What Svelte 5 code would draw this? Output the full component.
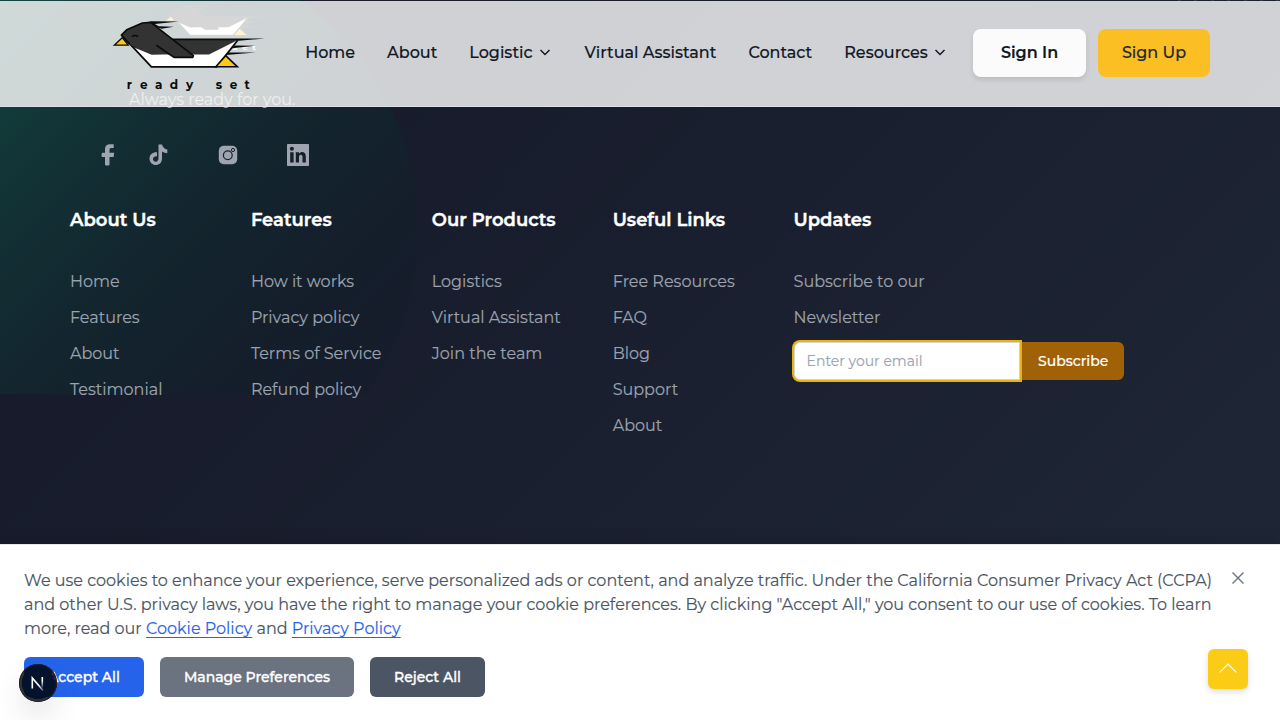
<script>
  const columns = [
    { title: 'About Us', items: ['Home', 'Features', 'About', 'Testimonial'] },
    { title: 'Features', items: ['How it works', 'Privacy policy', 'Terms of Service', 'Refund policy'] },
    { title: 'Our Products', items: ['Logistics', 'Virtual Assistant', 'Join the team'] },
    { title: 'Useful Links', items: ['Free Resources', 'FAQ', 'Blog', 'Support', 'About'] }
  ];
  const nav = [
    { label: 'Home' },
    { label: 'About' },
    { label: 'Logistic', menu: true },
    { label: 'Virtual Assistant' },
    { label: 'Contact' },
    { label: 'Resources', menu: true }
  ];
</script>

{#snippet bird(ink, outline)}
  <svg class="bird" viewBox="0 0 154 76" aria-hidden="true">
    <g transform="translate(.7 .2)">
      <path d="M1.6 30 9.5 22.5 15.5 30Z" fill="#fbc917" stroke={outline} stroke-width="1.3" />
      <path d="M9 20 38.7 51.6H104L124.7 25 58 24Z" fill="#fff" />
      <path d="M18 31 38.7 39.2H96.3L124.7 25 104 24H52Z" fill="#333" />
      <path d="M9 20 38.7 51.6H104L125 25" fill="none" stroke={outline} stroke-width="1.8" />
      <path d="M103 51.6 113 40.5 124.7 51.6Z" fill="#fbc917" stroke={outline} stroke-width="1.6" />
      <path d="M57 23.2H125L152 23.2 126 25.6 122 25H59Z" fill={outline} />
      <path d="M122 30.4 143 30.6 119 33ZM116 37.2 143 37.4 113 39.8Z" fill={outline} />
      <path d="M37 6 66 6.4 42 8.8 46 11 61 11.6 49 13.5 42 11Z" fill={outline} />
      <path d="M8.7 20 14 14.6 29.7 7.8 38 7.2 80.7 40.5 80 42.2H61.3L43.7 30 56 38.6 38.7 39.2 17 29Z" fill="#333" />
      <path d="M17 29 8.7 20 14 14.6 29.7 7.8 38 7.2 80.7 40.5 80 42.2H61.3L43.7 30" fill="none" stroke={outline} stroke-width="1.7" stroke-linejoin="round" />
      <path d="M19 21.6q3.4-2.6 6.6 0" fill="none" stroke={outline} stroke-width="1.4" />
    </g>
    <text y="73.6" x="14.8 28 43 57.8 74 0 103.8 117.8 132.6" font-family="Montserrat, Lato, sans-serif" font-weight="700" font-size="12" fill={ink}>ready set</text>
  </svg>
{/snippet}

<div class="page">
  <div class="glow"></div>
  <div class="dots"></div>
  <div class="ghost">{@render bird('#fff', '#3a3a3a')}</div>
  <header>
    <div class="logo">{@render bird('#0b0b0b', '#0b0b0b')}</div>
    <nav>
      {#each nav as item}
        <a href="#top">{item.label}{#if item.menu}<svg width="12" height="12" viewBox="0 0 12 12"><path d="M1.5 4 6 8.5 10.5 4" fill="none" stroke="#111827" stroke-width="1.5" /></svg>{/if}</a>
      {/each}
    </nav>
    <div class="auth">
      <button class="signin">Sign In</button>
      <button class="signup">Sign Up</button>
    </div>
  </header>
  <p class="tagline">Always ready for you.</p>

  <main>
    <div class="social">
      <svg class="fb" width="14" height="22" viewBox="0 0 14 22"><path d="M4 21V13H.8Q.2 10.7 1 8.7H4V5Q4 .2 9 .2H12.7V4H10Q8.5 4 8.5 5.5V8.7H13.2L12.6 13H8.5V21Q6.2 22 4 21Z" /></svg>
      <svg class="tt" width="19" height="22" viewBox="0 0 19 22"><path d="M9.5.5H13Q14 4.6 18.3 5.6V9.2Q15.5 9.2 13 7.5V14.5C13 23 1 23.3.5 14.8.4 10.5 4 8 8 8.4V12.2C2.7 11.8 3 17.6 6.7 17.7 8.7 17.7 9.5 16 9.5 14Z" /></svg>
      <svg class="ig" width="20" height="20" viewBox="0 0 20 20"><rect x=".8" y=".8" width="18.4" height="18.4" rx="5" /><circle cx="9.8" cy="10.2" r="4.4" fill="none" stroke="#14242e" stroke-width="1.2" /><circle cx="15" cy="5" r="1.6" fill="none" stroke="#14242e" stroke-width="1" /></svg>
      <svg class="li" width="22" height="22" viewBox="0 0 22 22"><rect width="22" height="22" rx=".7" /><path d="M3.2 8.3H6.6V18.5H3.2ZM8.8 8.3H12V9.7C14 7 18.8 7.6 18.8 12.2V18.5H15.5V13C15.5 10 12 10.2 12 13V18.5H8.8Z" fill="#14202b" /><circle cx="4.9" cy="4.8" r="2" fill="#14202b" /></svg>
    </div>
    <div class="columns">
      {#each columns as c}
        <section>
          <h3>{c.title}</h3>
          {#each c.items as label}<a href="#top">{label}</a>{/each}
        </section>
      {/each}
      <section>
        <h3>Updates</h3>
        <a href="#top">Subscribe to our</a>
        <a href="#top">Newsletter</a>
        <div class="form">
          <div class="field">Enter your email</div>
          <button>Subscribe</button>
        </div>
      </section>
    </div>
  </main>

  <aside class="cookies">
    <p>We use cookies to enhance your experience, serve personalized ads or content, and analyze traffic. Under the California Consumer Privacy Act (CCPA) and other U.S. privacy laws, you have the right to manage your cookie preferences. By clicking "Accept All," you consent to our use of cookies. To learn more, read our <a href="#cookies">Cookie Policy</a> and <a href="#privacy">Privacy Policy</a></p>
    <svg class="close" width="12" height="12" viewBox="0 0 12 12"><path d="M.5.5 11.5 11.5M11.5.5.5 11.5" stroke="#6b7280" stroke-width="1.4" /></svg>
    <div class="choices">
      <button class="accept">Accept All</button>
      <button class="manage">Manage Preferences</button>
      <button class="reject">Reject All</button>
    </div>
  </aside>
  <button class="up" aria-label="Back to top"><svg width="18" height="10" viewBox="0 0 18 10"><path d="M.7 9.3 9 1 17.3 9.3" fill="none" stroke="#fff" stroke-width="1.1" /></svg></button>
  <div class="dev">
    <svg width="38" height="38" viewBox="0 0 38 38">
      <defs>
        <linearGradient id="fade" gradientUnits="userSpaceOnUse" x1="0" y1="13" x2="0" y2="25"><stop offset=".3" stop-color="#fff" /><stop offset="1" stop-color="#fff" stop-opacity="0" /></linearGradient>
        <linearGradient id="tail" gradientUnits="userSpaceOnUse" x1="20" y1="21" x2="25" y2="27"><stop offset="0" stop-color="#fff" /><stop offset="1" stop-color="#fff" stop-opacity=".2" /></linearGradient>
      </defs>
      <path d="M13.3 24.6V13.9L24 26.6" fill="none" stroke="url(#tail)" stroke-width="1.6" />
      <path d="M23.3 13V23.6" stroke="url(#fade)" stroke-width="1.6" />
    </svg>
  </div>
</div>

<style>
  :global(body) { margin: 0; overflow: hidden; }
  * { box-sizing: border-box; }
  .page { position: relative; width: 1280px; height: 720px; overflow: hidden; font-family: Montserrat, Inter, sans-serif; font-size: 16px; -webkit-text-stroke: .15px; background: linear-gradient(135deg, #171b2b 20%, #1f2736 100%); }
  a { color: inherit; text-decoration: none; }
  button { border: 0; padding: 0; font: inherit; border-radius: 6px; display: flex; align-items: center; justify-content: center; }
  p, h3 { margin: 0; }
  .glow { position: absolute; left: 0; top: 0; width: 420px; height: 394px; clip-path: circle(284px at 134px 230px); background: linear-gradient(135deg, #124640 0%, #123b3a 13%, #122f34 31%, #13252e 50%, #141f2b 72%, #161c2b 95%); }
  .dots { position: absolute; left: 1178px; top: 0; width: 102px; height: 1px; background: repeating-linear-gradient(90deg, #ffffff1a 0 3px, transparent 3px 16.4px); }
  .ghost { position: absolute; left: 164px; top: 1px; width: 102.5px; }
  .bird { display: block; width: 100%; -webkit-text-stroke: 0; }
  header { position: relative; top: 1px; height: 106px; display: flex; align-items: center; padding: 0 70px 3px 112px; background: rgba(255, 255, 255, .8); border-bottom: 1px solid #dedfe2; color: #111827; }
  .logo { width: 154px; height: 76px; align-self: flex-start; margin-top: 14px; }
  nav { display: flex; gap: 32px; margin-left: 39.2px; font-weight: 500; }
  nav a { display: flex; align-items: center; white-space: nowrap; }
  nav svg { margin: 0 2px 0 6px; }
  .auth { display: flex; gap: 12px; margin-left: auto; margin-top: 2px; font-weight: 500; }
  .auth button { height: 48px; border-radius: 8px; color: #111827; padding-bottom: 2px; }
  .auth .signin { width: 113px; background: #fbfbfc; font-weight: 600; box-shadow: 0 3px 5px #0000001a; }
  .auth .signup { width: 112px; background: #fbbf24; color: #1f2937; }
  .tagline { position: absolute; left: 129px; top: 88px; line-height: 24px; color: rgba(255, 255, 255, .6); }
  main { position: relative; padding: 38px 70px 0; }
  .social { display: flex; align-items: center; height: 22px; padding-left: 31px; fill: #a0a4b1; }
  .tt { margin-left: 34px; }
  .ig { margin: -1px 0 0 50px; }
  .li { margin-left: 49px; }
  .columns { display: grid; grid-template-columns: repeat(4, 180.9px) 1fr; padding-top: 38px; }
  h3 { color: #fff; font-size: 18px; line-height: 32px; font-weight: 600; margin-bottom: 28px; -webkit-text-stroke: .4px; }
  section > a { display: block; height: 36px; line-height: 36px; color: #9ca3af; }
  .form { display: flex; height: 38px; margin-top: 6px; font-size: 14px; font-weight: 500; }
  .field { position: relative; z-index: 1; width: 226.8px; background: #fff; border: 1px solid #d1d5db; border-radius: 6px 0 0 6px; box-shadow: 0 0 0 2px #eab308; color: #9ca3af; padding-left: 12px; line-height: 36px; font-weight: 400; }
  .form button { width: 103.6px; padding-left: 2px; color: #fff; background: #a16207; border-radius: 0 6px 6px 0; }
  .cookies { position: absolute; inset: 544px 0 0; border-top: 1px solid #e5e7eb; background: #fff; padding: 24px; color: #4b5563; display: grid; grid-template-columns: 1192px 1fr; align-content: start; box-shadow: 0 -4px 12px #0002; }
  .cookies p { line-height: 24px; }
  .cookies a { color: #2563eb; text-decoration: underline; text-underline-offset: 3px; text-decoration-thickness: 1px; }
  .close { margin: 3px 0 0 16px; }
  .choices { display: flex; gap: 16px; font-size: 14px; font-weight: 500; margin-top: 16px; -webkit-text-stroke: .35px; }
  .choices button { height: 40px; color: #fff; }
  .accept { width: 120px; background: #2563eb; }
  .manage { width: 194px; background: #6b7280; }
  .reject { width: 115px; background: #4b5563; }
  .up { position: absolute; left: 1208px; top: 649px; width: 40px; height: 40px; background: #facc15; box-shadow: 0 3px 6px #0002; }
  .up svg { margin-top: -2px; }
  .dev { position: absolute; left: 19px; top: 663.5px; width: 38px; height: 38px; border-radius: 50%; background: radial-gradient(circle, #04122d 15.8px, rgba(0, 0, 0, .8) 16.6px); box-shadow: inset 0 0 0 1px #222, 0 16px 32px -8px #0004; }
</style>
